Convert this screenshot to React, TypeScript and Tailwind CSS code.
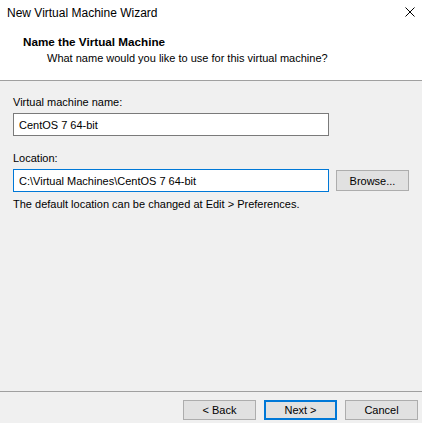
import * as React from "react"

// Windows-style "New Virtual Machine Wizard" dialog, first page (VM name + location).

const FONT = "font-['Liberation_Sans',Arial,sans-serif]"

function WinButton({
  children,
  primary = false,
}: {
  children: React.ReactNode
  primary?: boolean
}) {
  return (
    <button
      type="button"
      className={
        primary
          ? "flex h-[20px] w-[73px] items-center justify-center border-2 border-[#0078d7] bg-[#e1e1e1] text-[11px] leading-[16px] text-black"
          : "flex h-[20px] w-[73px] items-center justify-center border border-[#adadad] bg-[#e1e1e1] text-[11px] leading-[16px] text-black"
      }
    >
      {children}
    </button>
  )
}

export default function App() {
  const [name, setName] = React.useState("CentOS 7 64-bit")
  const [location, setLocation] = React.useState(
    "C:\\Virtual Machines\\CentOS 7 64-bit",
  )

  return (
    <div
      className={`flex h-[423px] w-[422px] flex-col overflow-hidden bg-[#f0f0f0] text-[11px] leading-[16px] text-black ${FONT}`}
    >
      {/* Title bar + page header */}
      <div className="flex h-[80px] flex-col bg-white">
        <div className="flex items-start justify-between pl-[7px] pr-[7px] pt-[5px]">
          <span className="text-[12px]">New Virtual Machine Wizard</span>
          <svg
            width="10"
            height="10"
            viewBox="0 0 10 10"
            className="mt-[2px]"
            aria-hidden
          >
            <path d="M0.5 0.5 L9.5 9.5 M9.5 0.5 L0.5 9.5" stroke="#000" strokeWidth="1" />
          </svg>
        </div>
        <div className="mt-[13px] pl-[23px] text-[11.7px] font-bold">Name the Virtual Machine</div>
        <div className="pl-[47px]">What name would you like to use for this virtual machine?</div>
      </div>
      <div className="h-px bg-[#a0a0a0]" />

      {/* Body */}
      <div className="flex flex-1 flex-col px-[13px] pt-[13px]">
        <label htmlFor="vm-name">Virtual machine name:</label>
        <input
          id="vm-name"
          value={name}
          onChange={(e) => setName(e.target.value)}
          className="mt-[3px] h-[23px] w-[316px] border border-[#7a7a7a] bg-white pl-[5px] text-[11px] outline-none"
        />

        <label htmlFor="vm-location" className="mt-[14px]">
          Location:
        </label>
        <div className="mt-[3px] flex items-center gap-[7px]">
          <input
            id="vm-location"
            value={location}
            onChange={(e) => setLocation(e.target.value)}
            className="h-[23px] w-[316px] border border-[#0078d7] bg-white pl-[5px] text-[11px] outline-none"
          />
          <button
            type="button"
            className="flex h-[21px] w-[73px] items-center justify-center border border-[#adadad] bg-[#e1e1e1]"
          >
            Browse...
          </button>
        </div>
        <p className="mt-[4px]">The default location can be changed at Edit &gt; Preferences.</p>
      </div>

      {/* Footer */}
      <div className="h-px bg-[#a0a0a0]" />
      <div className="flex h-[31px] items-start justify-end gap-[8px] pr-[4px] pt-[8px]">
        <WinButton>&lt; Back</WinButton>
        <WinButton primary>Next &gt;</WinButton>
        <WinButton>Cancel</WinButton>
      </div>
    </div>
  )
}
